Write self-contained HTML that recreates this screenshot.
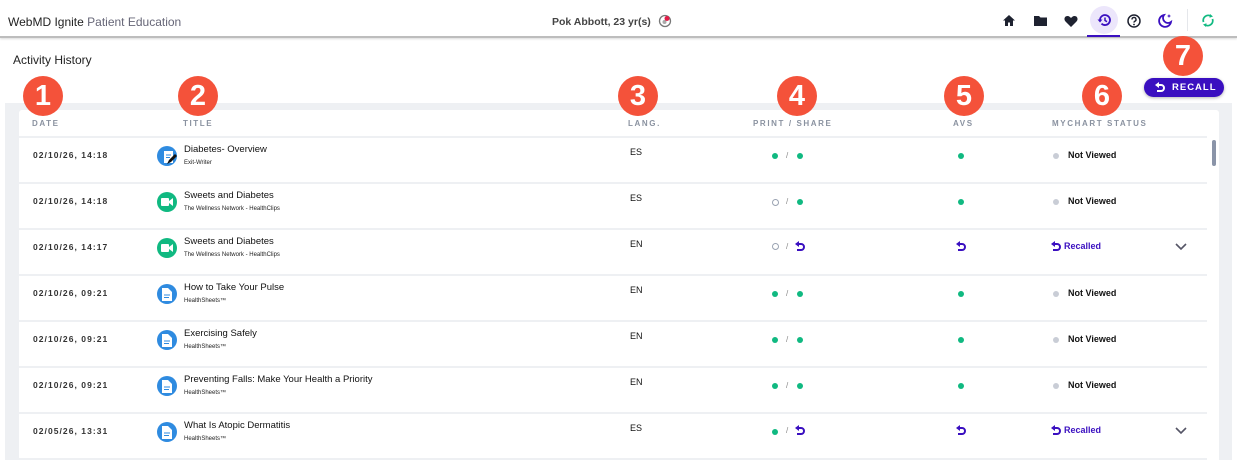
<!DOCTYPE html>
<html><head><meta charset="utf-8"><style>
*{margin:0;padding:0;box-sizing:border-box}
body{width:1237px;height:469px;overflow:hidden;background:#fff;font-family:"Liberation Sans",Arial,sans-serif;position:relative;color:#111}
.a{position:absolute}
.hdr{left:0;top:0;width:1237px;height:38px;background:#fff;border-bottom:2px solid #bdbdbd;box-shadow:0 1px 2px rgba(0,0,0,.15)}
.badge{position:absolute;width:40px;height:40px;border-radius:50%;background:#f4523a;color:#fff;font:bold 29px/40px "Liberation Sans",sans-serif;text-align:center}
.th{position:absolute;top:119px;font-size:8px;letter-spacing:1.6px;color:#8a92a0;font-weight:bold}
.row{position:absolute;left:19px;width:1188px;height:46px;border-top:2px solid #eef0f3}
.date{position:absolute;left:14px;top:12px;font-size:8.5px;font-weight:bold;letter-spacing:1.05px;color:#333}
.ic{position:absolute;left:138px;top:8px;width:20px;height:20px;border-radius:50%}
.t1{position:absolute;left:165px;top:6px;font-size:9.5px;color:#111}
.t2{position:absolute;left:165px;top:22px;font-size:6px;color:#222}
.lang{position:absolute;left:611px;top:9px;font-size:9px;color:#111}
.g{position:absolute;width:6px;height:6px;border-radius:50%;background:#10b981}
.o{position:absolute;width:7px;height:7px;border-radius:50%;border:1px solid #9aa3b2}
.gr{position:absolute;width:6px;height:6px;border-radius:50%;background:#c9cdd6}
.sl{position:absolute;font-size:8px;color:#888}
.nv{position:absolute;left:1049px;top:12px;font-size:9px;font-weight:bold}
.rc{position:absolute;font-size:9px;font-weight:bold;color:#3a0fc0}
</style></head><body>
<div class="a hdr"></div>
<div class="a" style="left:8px;top:15px;font-size:12px;color:#222">WebMD Ignite <span style="color:#667">Patient Education</span></div>
<div class="a" style="left:552px;top:16px;font-size:10.5px;font-weight:bold;color:#444">Pok Abbott, 23 yr(s)</div>
<svg class="a" style="left:658px;top:14px" width="14" height="14" viewBox="0 0 14 14"><circle cx="7" cy="7" r="5.5" fill="none" stroke="#777" stroke-width="1.3"/><circle cx="6.5" cy="8" r="2" fill="#aaa"/><circle cx="9" cy="4.5" r="2.5" fill="#e11d48"/></svg>
<svg class="a" style="left:1002px;top:14px" width="14" height="13" viewBox="0 0 14 13"><path d="M7 1L1 6.5h2V12h3V8.5h2V12h3V6.5h2z" fill="#1e2230"/></svg>
<svg class="a" style="left:1033px;top:15px" width="15" height="12" viewBox="0 0 15 12"><path d="M1 1h5l1.5 1.5H14V11H1z" fill="#1e2230"/></svg>
<svg class="a" style="left:1064px;top:15px" width="14" height="12" viewBox="0 0 14 12"><path d="M7 12L1.5 6.5C-.5 4.5.5 1 3.5 1 5 1 6 2 7 3c1-1 2-2 3.5-2 3 0 4 3.5 2 5.5z" fill="#1e2230"/></svg>
<div class="a" style="left:1090px;top:6px;width:28px;height:28px;border-radius:50%;background:#ece6fb"></div>
<div class="a" style="left:1087px;top:35px;width:33px;height:2px;background:#3a0fc0"></div>
<svg class="a" style="left:1096px;top:13px" width="16" height="14" viewBox="0 0 16 14"><path d="M4 7a5 5 0 1 1 1.5 3.6" fill="none" stroke="#3a0fc0" stroke-width="1.8"/><path d="M1.5 6.5h5L4 9.5z" fill="#3a0fc0"/><path d="M9 4.5V7.5l2 1.2" fill="none" stroke="#3a0fc0" stroke-width="1.5"/></svg>
<svg class="a" style="left:1127px;top:14px" width="14" height="14" viewBox="0 0 14 14"><circle cx="7" cy="7" r="6" fill="none" stroke="#1e2230" stroke-width="1.5"/><path d="M5 5.5a2 2 0 1 1 2.8 1.8c-.6.3-.8.7-.8 1.3" fill="none" stroke="#1e2230" stroke-width="1.4"/><circle cx="7" cy="10.5" r=".9" fill="#1e2230"/></svg>
<svg class="a" style="left:1158px;top:13px" width="15" height="15" viewBox="0 0 15 15"><path d="M6 2a6 6 0 1 0 7 7A5 5 0 0 1 6 2z" fill="none" stroke="#3a0fc0" stroke-width="1.8"/><path d="M11 1l.6 1.4L13 3l-1.4.6L11 5l-.6-1.4L9 3l1.4-.6z" fill="#3a0fc0"/></svg>
<div class="a" style="left:1187px;top:9px;width:1px;height:22px;background:#e5e7eb"></div>
<svg class="a" style="left:1201px;top:13px" width="14" height="15" viewBox="0 0 14 15"><path d="M2.5 9A5 5 0 0 1 10 3.2M11.5 6A5 5 0 0 1 4 11.8" fill="none" stroke="#10b981" stroke-width="1.8"/><path d="M9 1l3 2.5-3.5 1.2zM5 14L2 11.5l3.5-1.2z" fill="#10b981"/></svg>

<div class="a" style="left:13px;top:53px;font-size:12px;color:#222">Activity History</div>
<div class="a" style="left:5px;top:103px;width:1227px;height:357px;background:#eef0f3"></div>
<div class="a" style="left:19px;top:110px;width:1200px;height:350px;background:#fff;border-radius:3px"></div>
<div class="a" style="left:1207px;top:137px;width:12px;height:323px;background:#fff"></div>
<div class="a" style="left:1212px;top:140px;width:4px;height:26px;border-radius:2px;background:#8a94a8"></div>
<div class="th" style="left:32px">DATE</div>
<div class="th" style="left:183px">TITLE</div>
<div class="th" style="left:628px">LANG.</div>
<div class="th" style="left:753px">PRINT / SHARE</div>
<div class="th" style="left:953px">AVS</div>
<div class="th" style="left:1052px">MYCHART STATUS</div>

<div class="row" style="top:136px"><div class="date">02/10/26, 14:18</div>
<div class="ic" style="background:#2f8be0"></div><svg class="a" style="left:140px;top:9px" width="20" height="20" viewBox="0 0 20 20"><rect x="5" y="4" width="9" height="12" fill="#fff"/><path d="M7 8h5M7 10.5h4" stroke="#2f8be0"/><path d="M8 17l2-4 6-6 2 2-6 6z" fill="#111"/></svg>
<div class="t1">Diabetes- Overview</div><div class="t2">Exit-Writer</div><div class="lang">ES</div>
<div class="g" style="left:753px;top:15px"></div><div class="sl" style="left:767px;top:13px">/</div><div class="g" style="left:778px;top:15px"></div>
<div class="g" style="left:939px;top:15px"></div><div class="gr" style="left:1034px;top:15px"></div><div class="nv">Not Viewed</div></div>

<div class="row" style="top:182px"><div class="date">02/10/26, 14:18</div>
<div class="ic" style="background:#10b981"></div><svg class="a" style="left:142px;top:13px" width="12" height="10" viewBox="0 0 12 10"><rect x="0" y="1" width="8" height="8" rx="1" fill="#fff"/><path d="M8 4l4-3v8l-4-3z" fill="#fff"/></svg>
<div class="t1">Sweets and Diabetes</div><div class="t2">The Wellness Network - HealthClips</div><div class="lang">ES</div>
<div class="o" style="left:753px;top:15px"></div><div class="sl" style="left:767px;top:13px">/</div><div class="g" style="left:778px;top:15px"></div>
<div class="g" style="left:939px;top:15px"></div><div class="gr" style="left:1034px;top:15px"></div><div class="nv">Not Viewed</div></div>

<div class="row" style="top:228px"><div class="date">02/10/26, 14:17</div>
<div class="ic" style="background:#10b981"></div><svg class="a" style="left:142px;top:13px" width="12" height="10" viewBox="0 0 12 10"><rect x="0" y="1" width="8" height="8" rx="1" fill="#fff"/><path d="M8 4l4-3v8l-4-3z" fill="#fff"/></svg>
<div class="t1">Sweets and Diabetes</div><div class="t2">The Wellness Network - HealthClips</div><div class="lang">EN</div>
<div class="o" style="left:753px;top:13px"></div><div class="sl" style="left:767px;top:12px">/</div>
<svg class="a" style="left:776px;top:11px" width="10" height="11" viewBox="0 0 10 11"><path d="M3 3h3a3 3 0 0 1 0 6H2" fill="none" stroke="#3a0fc0" stroke-width="2"/><path d="M0 3l4-3v6z" fill="#3a0fc0"/></svg>
<svg class="a" style="left:937px;top:11px" width="10" height="11" viewBox="0 0 10 11"><path d="M3 3h3a3 3 0 0 1 0 6H2" fill="none" stroke="#3a0fc0" stroke-width="2"/><path d="M0 3l4-3v6z" fill="#3a0fc0"/></svg>
<svg class="a" style="left:1032px;top:11px" width="10" height="11" viewBox="0 0 10 11"><path d="M3 3h3a3 3 0 0 1 0 6H2" fill="none" stroke="#3a0fc0" stroke-width="2"/><path d="M0 3l4-3v6z" fill="#3a0fc0"/></svg>
<div class="rc" style="left:1045px;top:11px">Recalled</div>
<svg class="a" style="left:1156px;top:13px" width="12" height="8" viewBox="0 0 12 8"><path d="M1 1l5 5 5-5" fill="none" stroke="#556" stroke-width="1.6"/></svg></div>

<div class="row" style="top:274px"><div class="date">02/10/26, 09:21</div>
<div class="ic" style="background:#2f8be0"></div><svg class="a" style="left:143px;top:12px" width="10" height="13" viewBox="0 0 10 13"><path d="M0 0h6l4 4v9H0z" fill="#fff"/><path d="M2 7h6M2 9.5h5" stroke="#2f8be0"/></svg>
<div class="t1">How to Take Your Pulse</div><div class="t2">HealthSheets™</div><div class="lang">EN</div>
<div class="g" style="left:753px;top:15px"></div><div class="sl" style="left:767px;top:13px">/</div><div class="g" style="left:778px;top:15px"></div>
<div class="g" style="left:939px;top:15px"></div><div class="gr" style="left:1034px;top:15px"></div><div class="nv">Not Viewed</div></div>

<div class="row" style="top:320px"><div class="date">02/10/26, 09:21</div>
<div class="ic" style="background:#2f8be0"></div><svg class="a" style="left:143px;top:12px" width="10" height="13" viewBox="0 0 10 13"><path d="M0 0h6l4 4v9H0z" fill="#fff"/><path d="M2 7h6M2 9.5h5" stroke="#2f8be0"/></svg>
<div class="t1">Exercising Safely</div><div class="t2">HealthSheets™</div><div class="lang">EN</div>
<div class="g" style="left:753px;top:15px"></div><div class="sl" style="left:767px;top:13px">/</div><div class="g" style="left:778px;top:15px"></div>
<div class="g" style="left:939px;top:15px"></div><div class="gr" style="left:1034px;top:15px"></div><div class="nv">Not Viewed</div></div>

<div class="row" style="top:366px"><div class="date">02/10/26, 09:21</div>
<div class="ic" style="background:#2f8be0"></div><svg class="a" style="left:143px;top:12px" width="10" height="13" viewBox="0 0 10 13"><path d="M0 0h6l4 4v9H0z" fill="#fff"/><path d="M2 7h6M2 9.5h5" stroke="#2f8be0"/></svg>
<div class="t1">Preventing Falls: Make Your Health a Priority</div><div class="t2">HealthSheets™</div><div class="lang">EN</div>
<div class="g" style="left:753px;top:15px"></div><div class="sl" style="left:767px;top:13px">/</div><div class="g" style="left:778px;top:15px"></div>
<div class="g" style="left:939px;top:15px"></div><div class="gr" style="left:1034px;top:15px"></div><div class="nv">Not Viewed</div></div>

<div class="row" style="top:412px;height:48px;border-bottom:2px solid #eef0f3"><div class="date">02/05/26, 13:31</div>
<div class="ic" style="background:#2f8be0"></div><svg class="a" style="left:143px;top:12px" width="10" height="13" viewBox="0 0 10 13"><path d="M0 0h6l4 4v9H0z" fill="#fff"/><path d="M2 7h6M2 9.5h5" stroke="#2f8be0"/></svg>
<div class="t1">What Is Atopic Dermatitis</div><div class="t2">HealthSheets™</div><div class="lang">ES</div>
<div class="g" style="left:753px;top:15px"></div><div class="sl" style="left:767px;top:12px">/</div>
<svg class="a" style="left:776px;top:11px" width="10" height="11" viewBox="0 0 10 11"><path d="M3 3h3a3 3 0 0 1 0 6H2" fill="none" stroke="#3a0fc0" stroke-width="2"/><path d="M0 3l4-3v6z" fill="#3a0fc0"/></svg>
<svg class="a" style="left:937px;top:11px" width="10" height="11" viewBox="0 0 10 11"><path d="M3 3h3a3 3 0 0 1 0 6H2" fill="none" stroke="#3a0fc0" stroke-width="2"/><path d="M0 3l4-3v6z" fill="#3a0fc0"/></svg>
<svg class="a" style="left:1032px;top:11px" width="10" height="11" viewBox="0 0 10 11"><path d="M3 3h3a3 3 0 0 1 0 6H2" fill="none" stroke="#3a0fc0" stroke-width="2"/><path d="M0 3l4-3v6z" fill="#3a0fc0"/></svg>
<div class="rc" style="left:1045px;top:11px">Recalled</div>
<svg class="a" style="left:1156px;top:13px" width="12" height="8" viewBox="0 0 12 8"><path d="M1 1l5 5 5-5" fill="none" stroke="#556" stroke-width="1.6"/></svg></div>

<div class="a" style="left:1144px;top:78px;width:80px;height:19px;border-radius:10px;background:#3a0fc0;box-shadow:0 1px 3px rgba(0,0,0,.3)"></div>
<svg class="a" style="left:1155px;top:82px" width="10" height="11" viewBox="0 0 10 11"><path d="M3 3h3a3 3 0 0 1 0 6H2" fill="none" stroke="#fff" stroke-width="2"/><path d="M0 3l4-3v6z" fill="#fff"/></svg>
<div class="a" style="left:1172px;top:82px;font-size:9.5px;font-weight:bold;letter-spacing:1px;color:#fff">RECALL</div>

<div class="badge" style="left:23px;top:76px">1</div>
<div class="badge" style="left:178px;top:76px">2</div>
<div class="badge" style="left:618px;top:76px">3</div>
<div class="badge" style="left:777px;top:76px">4</div>
<div class="badge" style="left:944px;top:76px">5</div>
<div class="badge" style="left:1082px;top:76px">6</div>
<div class="badge" style="left:1163px;top:36px">7</div>
</body></html>
